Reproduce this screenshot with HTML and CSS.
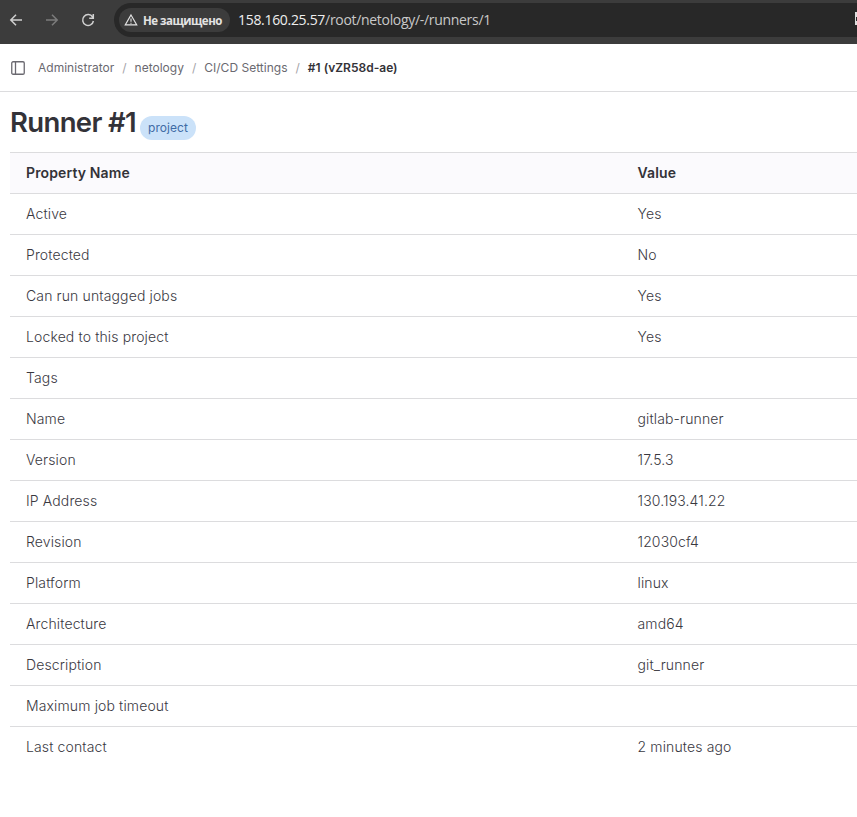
FILE: index.html
```html
<!DOCTYPE html>
<html lang="en">
<head>
<meta charset="utf-8">
<title>Runner #1</title>
<link rel="stylesheet" href="styles.css">
</head>
<body>
<header class="browser">
  <svg class="nav-icon" viewBox="0 0 16 16"><path d="M14 8H3M8 2.8 2.8 8 8 13.2"/></svg>
  <svg class="nav-icon disabled" viewBox="0 0 16 16"><path d="M2 8h11M8 2.8 13.2 8 8 13.2"/></svg>
  <svg class="nav-icon" viewBox="0 0 16 16"><path d="M12.6 5A5.4 5.4 0 1 0 13.4 9M13.3 2v4.2H9.2"/></svg>
  <div class="address">
    <span class="security"><svg class="warn" viewBox="0 0 16 16"><path d="M8 2.2 14.6 13.6H1.4ZM8 6.3v3.6M8 11v1.4"/></svg>Не защищено</span>
    <span class="url">158.160.25.57<span class="path">/root/netology/-/runners/1</span></span>
    <span class="edge"></span>
  </div>
</header>
<nav class="crumbs">
  <svg class="sidebar-icon" viewBox="0 0 16 16"><rect x="1.75" y="1.75" width="12.5" height="12.5" rx="1.3"/><path d="M5.5 2v12"/></svg>
  <a>Administrator</a><i>/</i><a>netology</a><i>/</i><a>CI/CD Settings</a><i>/</i><b>#1 (vZR58d-ae)</b>
</nav>
<main>
  <div class="title"><h1>Runner #1</h1><span class="badge">project</span></div>
  <table>
    <thead><tr><th class="name">Property Name</th><th>Value</th></tr></thead>
    <tbody>
      <tr><td>Active</td><td>Yes</td></tr>
      <tr><td>Protected</td><td>No</td></tr>
      <tr><td>Can run untagged jobs</td><td>Yes</td></tr>
      <tr><td>Locked to this project</td><td>Yes</td></tr>
      <tr><td>Tags</td><td></td></tr>
      <tr><td>Name</td><td>gitlab-runner</td></tr>
      <tr><td>Version</td><td>17.5.3</td></tr>
      <tr><td>IP Address</td><td>130.193.41.22</td></tr>
      <tr><td>Revision</td><td>12030cf4</td></tr>
      <tr><td>Platform</td><td>linux</td></tr>
      <tr><td>Architecture</td><td>amd64</td></tr>
      <tr><td>Description</td><td>git_runner</td></tr>
      <tr><td>Maximum job timeout</td><td></td></tr>
      <tr><td>Last contact</td><td>2 minutes ago</td></tr>
    </tbody>
  </table>
</main>
</body>
</html>
```
FILE: styles.css
```css
* { box-sizing: border-box; }
body { margin: 0; background: #fff; color: #333238; font: 14px/20px Inter, sans-serif; }
svg { fill: none; stroke: currentColor; flex: none; }
.browser { height: 44px; padding: 0 0 4px 8px; background: #3c3c3c; display: flex; align-items: center; color: #d0d0d0; }
.nav-icon { width: 16px; height: 16px; margin-right: 20px; stroke-width: 1.5; }
.nav-icon.disabled { color: #7c7c7c; }
.address { flex: 1; height: 34px; margin-left: -2px; padding-left: 5px; border-radius: 17px 0 0 17px; background: #282828; display: flex; align-items: center; }
.security { height: 24px; width: 111px; padding-left: 5px; border-radius: 12px; background: #3c3c3c; display: flex; align-items: center; gap: 5px; font: 700 11.5px "Open Sans", sans-serif; letter-spacing: -0.5px; white-space: nowrap; color: #e3e3e3; }
.warn { width: 14px; height: 14px; stroke-width: 1.3; }
.url { margin-left: 8px; font: 14px/20px "Open Sans", sans-serif; letter-spacing: -0.31px; color: #eee; }
.path { color: #c8c8c8; }
.edge { width: 2px; height: 13px; margin: -3px 0 0 auto; border: solid #ddd; border-width: 5px 0 4px 1px; }
.crumbs { height: 48px; padding-left: 10px; border-bottom: 1px solid #dcdcde; display: flex; align-items: center; font-size: 12px; letter-spacing: 0.01px; color: #6a6970; }
.sidebar-icon { width: 16px; height: 16px; margin-right: 12px; stroke-width: 1.3; }
.crumbs i { font-style: normal; margin: 0 8px; color: #a4a3a8; }
.crumbs b { font-weight: 600; color: #333238; }
main { padding-left: 10px; }
.title { height: 60px; display: flex; align-items: flex-start; }
h1 { margin: 12px 4px 0 0; font-size: 27.5px; line-height: 36px; letter-spacing: -0.65px; font-weight: 580; white-space: nowrap; }
.badge { margin-top: 24px; height: 24px; padding: 2px 8px; border-radius: 12px; background: #cbe2f9; color: #3f6ba5; font-size: 12px; letter-spacing: 0.05px; }
table { width: 100%; border-collapse: collapse; table-layout: fixed; }
th, td { height: 41px; padding: 0 15.5px; text-align: left; border-top: 1px solid #dcdcde; }
td { color: #3a393f; font-weight: 350; letter-spacing: 0.13px; }
th:first-child, td:first-child { padding-left: 16px; }
th { background: #fbfafd; font-weight: 600; letter-spacing: 0.13px; }
.name { width: 612px; }
```
